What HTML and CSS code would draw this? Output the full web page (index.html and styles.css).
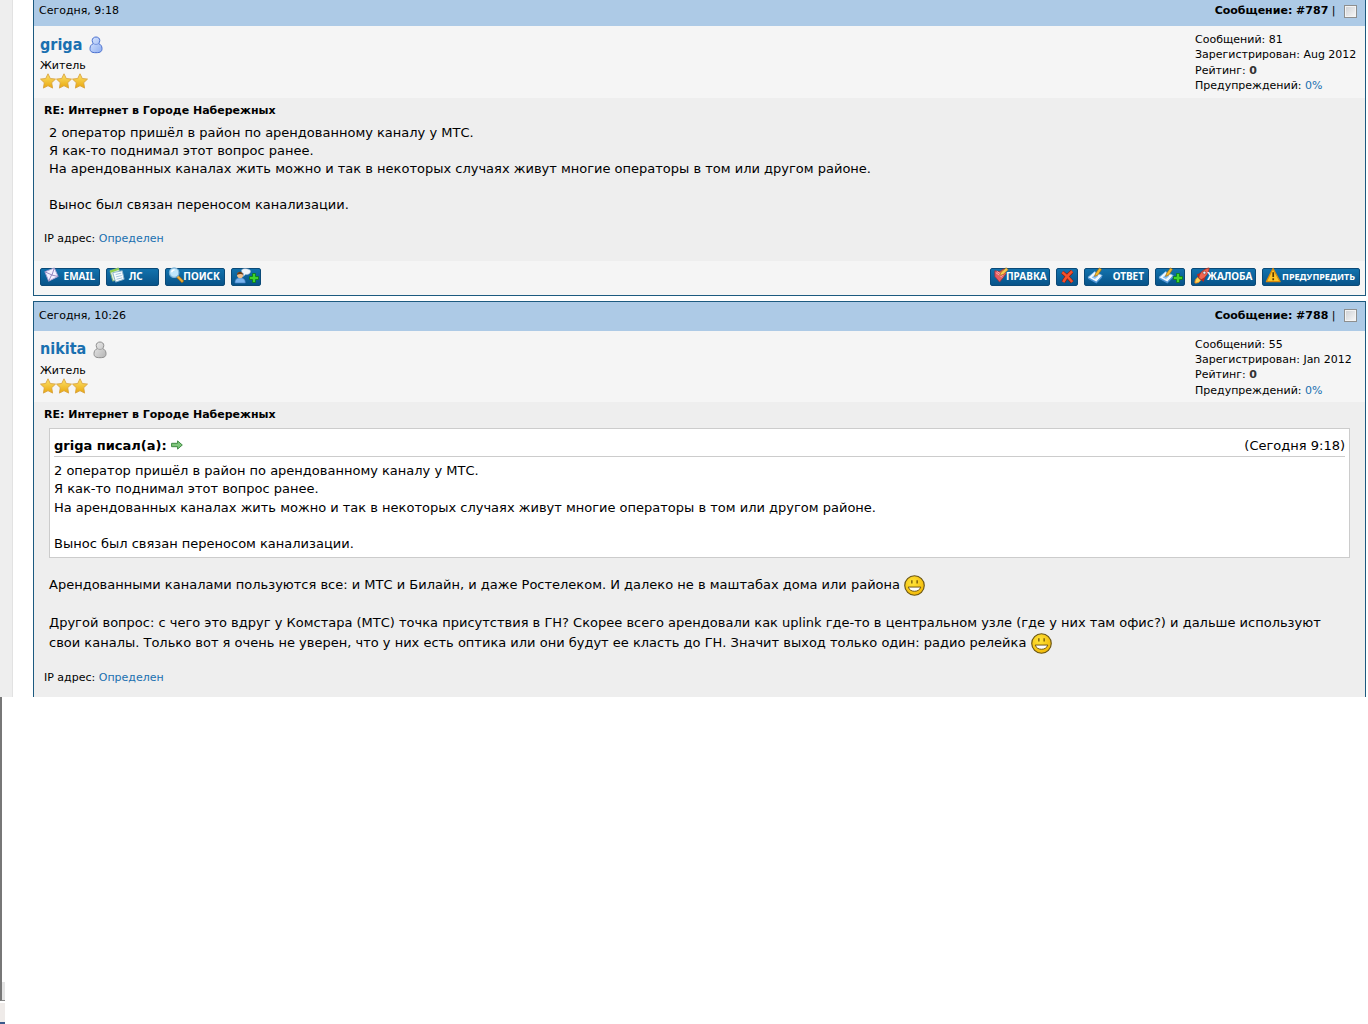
FILE: index.html
```html
<!DOCTYPE html>
<html lang="ru">
<head>
    <meta charset="UTF-8">
    <meta name="viewport" content="width=device-width, initial-scale=1.0">
    <title>Интернет в Городе Набережных</title>
    <link rel="stylesheet" href="styles.css">
</head>
<body>
    <svg class="sprite" aria-hidden="true">
        <defs>
            <linearGradient id="gold" x1="0" y1="0" x2="0" y2="1">
                <stop offset="0" stop-color="#fde36b"/>
                <stop offset="1" stop-color="#e9a70d"/>
            </linearGradient>
            <linearGradient id="blue" x1="0" y1="0" x2="1" y2="1">
                <stop offset="0" stop-color="#dce8ff"/>
                <stop offset="1" stop-color="#8eaef0"/>
            </linearGradient>
            <linearGradient id="gray" x1="0" y1="0" x2="1" y2="1">
                <stop offset="0" stop-color="#eeeeee"/>
                <stop offset="1" stop-color="#b4b4b4"/>
            </linearGradient>
            <radialGradient id="face" cx="0.4" cy="0.35" r="0.7">
                <stop offset="0" stop-color="#ffe53a"/>
                <stop offset="1" stop-color="#f2b705"/>
            </radialGradient>
        </defs>
        <symbol id="star" viewBox="0 0 16 16">
            <path d="M8 .8l2.3 4.7 5.2.6-3.8 3.6.9 5.4L8 12.7l-4.6 2.4.9-5.4L.5 6.1l5.2-.6z" fill="url(#gold)" stroke="#d9a441" stroke-width=".9" stroke-linejoin="round"/>
        </symbol>
        <symbol id="smile" viewBox="0 0 20 20">
            <circle cx="10" cy="10" r="9.3" fill="url(#face)" stroke="#6b5718" stroke-width="1.1"/>
            <path d="M7.500 5v3M12.500 5v3" stroke="#5c4200" stroke-width="1.1"/>
            <path d="M4 11.500h12c-.9 2.600-3 4-6 4s-5.100-1.400-6-4z" fill="#fff" stroke="#6b5210" stroke-width=".9"/>
        </symbol>
        <symbol id="pen" viewBox="0 0 18 18">
            <path d="M1 11l7-6 8 4-6 7z" fill="#eef7ff" stroke="#83b9e6"/>
            <path d="M1 11l9 5 6-7v2l-6 6.500-9-5z" fill="#4d93d4"/>
            <path d="M5 11l4-3.500 3 1.700-3.500 3.500z" fill="#86bdf0"/>
            <path d="M8 10l1-3 4-6 2.500 1.500-4 6z" fill="#f6b92c" stroke="#9a6a13" stroke-width=".7"/>
        </symbol>
        <symbol id="plus" viewBox="0 0 10 10">
            <path d="M3.500.5h3v3h3v3h-3v3h-3v-3h-3v-3h3z" fill="#3fd32c" stroke="#0b7a16" stroke-width=".8"/>
        </symbol>
    </svg>

    <div class="page">
        <div class="side"></div>
        <main class="posts">
            <article class="post">
                <header class="post-head">
                    <span>Сегодня, 9:18</span>
                    <span class="post-num"><strong>Сообщение: #787</strong> | <input type="checkbox" aria-label="Выбрать сообщение 787"></span>
                </header>
                <div class="author">
                    <div>
                        <div class="nick">
                            <a href="#">griga</a>
                            <svg class="status" viewBox="0 0 14 18"><path d="M7 1c2.300 0 3.800 1.500 3.800 3.500 0 1.300-.5 2.200-1.200 3 2 .8 3.400 2.600 3.400 5 0 2.800-1.200 4.200-6 4.200s-6-1.400-6-4.200c0-2.400 1.400-4.200 3.400-5-.7-.8-1.200-1.700-1.200-3C3.200 2.500 4.700 1 7 1z" fill="url(#blue)" stroke="#4a70cf"/><path d="M4.400 7.700c1.600 1 3.600 1 5.200 0" fill="none" stroke="#7897e0"/></svg>
                        </div>
                        <div>Житель</div>
                        <div class="stars"><svg><use href="#star"/></svg><svg><use href="#star"/></svg><svg><use href="#star"/></svg></div>
                    </div>
                    <div class="stats">
                        Сообщений: 81<br>
                        Зарегистрирован: Aug 2012<br>
                        Рейтинг: <b>0</b><br>
                        Предупреждений: <a href="#">0%</a>
                    </div>
                </div>
                <div class="post-body">
                    <div class="subject">RE: Интернет в Городе Набережных</div>
                    <div class="text">
                        2 оператор пришёл в район по арендованному каналу у МТС.<br>
                        Я как-то поднимал этот вопрос ранее.<br>
                        На арендованных каналах жить можно и так в некоторых случаях живут многие операторы в том или другом районе.<br>
                        <br>
                        Вынос был связан переносом канализации.
                    </div>
                    <div class="ip">IP адрес: <a href="#">Определен</a></div>
                </div>
                <footer class="post-foot">
                    <div class="buttons">
                        <button class="btn medium" type="button">
                            <svg viewBox="0 0 18 18"><path d="M2 5l10-4 4 9-10 5z" fill="#f4f1ff" stroke="#a99fd0"/><path d="M2 5l7.500 3.500L12 1M6 15l3-6.500 7 1.500" fill="none" stroke="#9085bd"/></svg>
                            EMAIL
                        </button>
                        <button class="btn small text-left" type="button">
                            <svg viewBox="0 0 18 18"><path d="M1 4l9-3 3 10-9 4z" fill="#dff0dc" stroke="#7fae77"/><path d="M4 6l10-2 2 9-9 3z" fill="#f7fcff" stroke="#8ab2cc"/><path d="M7 8l6-1.500M7.500 10.500l6-1.500M8 13l6-1.500" stroke="#9dc0d8"/><path d="M1 4l9-3 .6 2L2 6z" fill="#8fce4a"/></svg>
                            ЛС
                        </button>
                        <button class="btn medium" type="button">
                            <svg viewBox="0 0 18 18"><path d="M10 10l6 6" stroke="#9a6a1a" stroke-width="3.500"/><path d="M10 10l5.500 5.500" stroke="#f0b03a" stroke-width="2"/><circle cx="6.500" cy="6" r="5" fill="#bfe6fb" stroke="#7fb4d8" stroke-width="1.300"/><path d="M4 5.500C4 4 5.500 3 7 3" stroke="#fff" stroke-width="1.500" fill="none"/></svg>
                            ПОИСК
                        </button>
                        <button class="btn pair" type="button" aria-label="Добавить в друзья">
                            <svg viewBox="0 0 18 18"><path d="M1 17c0-4 2-5.500 5.500-5.500S12 13 12 17z" fill="#78b4ef" stroke="#3b74b8" stroke-width=".7"/><circle cx="6.500" cy="8.500" r="3.300" fill="#f3c08c"/><path d="M3 8.500C3 4 10 4 10 8.500 8 7 6 7 3 8.500z" fill="#6a3c16"/><path d="M8 3.500C8 1 17.500 1 17.500 4.500S13 8 12 8l-2 2V7C8.500 6.500 8 5 8 3.500z" fill="#f1f6fb" stroke="#9db7cf" stroke-width=".6"/></svg>
                            <svg class="plus"><use href="#plus"/></svg>
                        </button>
                    </div>
                    <div class="buttons">
                        <button class="btn medium" type="button">
                            <svg viewBox="0 0 18 18"><path d="M2 4l5 1 4-3 3 5-7 9-5-6z" fill="#e45d62" stroke="#a92e38" stroke-width=".8"/><path d="M3 6l7 5M4 4.500l7 5" stroke="#f8b3b3"/><path d="M7 9l1.500-3.500L14 .8l2 2-5 5z" fill="#f8c94e" stroke="#9f6d19" stroke-width=".7"/></svg>
                            ПРАВКА
                        </button>
                        <button class="btn single" type="button" aria-label="Удалить">
                            <svg viewBox="0 0 18 18"><path d="M3.500 5.500C7 8 11 12 14 16M14 4.500C10 8 7 11 4.500 16" fill="none" stroke="#8c1d0d" stroke-width="4"/><path d="M3.500 5.500C7 8 11 12 14 16M14 4.500C10 8 7 11 4.500 16" fill="none" stroke="#f4512c" stroke-width="2.600"/></svg>
                        </button>
                        <button class="btn medium-plus" type="button">
                            <svg><use href="#pen"/></svg>
                            ОТВЕТ
                        </button>
                        <button class="btn pair" type="button" aria-label="Цитировать">
                            <svg><use href="#pen"/></svg>
                            <svg class="plus"><use href="#plus"/></svg>
                        </button>
                        <button class="btn medium-plus" type="button">
                            <svg viewBox="0 0 18 18"><path d="M1 17c0-3 1-5 3-6l3 3c-1 2-3 3-6 3z" fill="#ffd65a" stroke="#f08c22"/><path d="M3 8l4-2 5 5-2 5-2-2-4-4z" fill="#b92a20"/><path d="M5 11c1-5 5-9 11-10 0 5-3 10-8.500 12.500z" fill="#ef6650" stroke="#a72a1b" stroke-width=".8"/><circle cx="11" cy="6" r="1.600" fill="#dff1ff" stroke="#7c2a20" stroke-width=".6"/></svg>
                            ЖАЛОБА
                        </button>
                        <button class="btn large" type="button">
                            <svg viewBox="0 0 18 18"><path d="M8.500 1.500L16 15.500H1.500z" fill="#ffc627" stroke="#d98a0b" stroke-width="1.300" stroke-linejoin="round"/><path d="M8.700 5.500v5M8.700 12v2" stroke="#5b3a00" stroke-width="1.800"/></svg>
                            ПРЕДУПРЕДИТЬ
                        </button>
                    </div>
                </footer>
            </article>

            <article class="post last">
                <header class="post-head">
                    <span>Сегодня, 10:26</span>
                    <span class="post-num"><strong>Сообщение: #788</strong> | <input type="checkbox" aria-label="Выбрать сообщение 788"></span>
                </header>
                <div class="author">
                    <div>
                        <div class="nick">
                            <a href="#">nikita</a>
                            <svg class="status" viewBox="0 0 14 18"><path d="M7 1c2.300 0 3.800 1.500 3.800 3.500 0 1.300-.5 2.200-1.200 3 2 .8 3.400 2.600 3.400 5 0 2.800-1.200 4.200-6 4.200s-6-1.400-6-4.200c0-2.400 1.400-4.200 3.400-5-.7-.8-1.200-1.700-1.200-3C3.200 2.500 4.700 1 7 1z" fill="url(#gray)" stroke="#8e8e8e"/><path d="M4.400 7.700c1.600 1 3.600 1 5.200 0" fill="none" stroke="#a5a5a5"/></svg>
                        </div>
                        <div>Житель</div>
                        <div class="stars"><svg><use href="#star"/></svg><svg><use href="#star"/></svg><svg><use href="#star"/></svg></div>
                    </div>
                    <div class="stats">
                        Сообщений: 55<br>
                        Зарегистрирован: Jan 2012<br>
                        Рейтинг: <b>0</b><br>
                        Предупреждений: <a href="#">0%</a>
                    </div>
                </div>
                <div class="post-body">
                    <div class="subject">RE: Интернет в Городе Набережных</div>
                    <div class="text">
                        <blockquote>
                            <div class="quote-head">
                                <strong>griga писал(а): <a href="#" aria-label="К сообщению"><svg class="arrow" viewBox="0 0 12 10"><path d="M.6 3.300h6V.9L11.300 5 6.600 9.100V6.700h-6z" fill="#7fc67c" stroke="#3d8a42"/></svg></a></strong>
                                <span>(Сегодня 9:18)</span>
                            </div>
                            2 оператор пришёл в район по арендованному каналу у МТС.<br>
                            Я как-то поднимал этот вопрос ранее.<br>
                            На арендованных каналах жить можно и так в некоторых случаях живут многие операторы в том или другом районе.<br>
                            <br>
                            Вынос был связан переносом канализации.
                        </blockquote>
                        Арендованными каналами пользуются все: и МТС и Билайн, и даже Ростелеком. И далеко не в маштабах дома или района <svg class="smile"><use href="#smile"/></svg><br>
                        <br>
                        Другой вопрос: с чего это вдруг у Комстара (МТС) точка присутствия в ГН? Скорее всего арендовали как uplink где-то в центральном узле (где у них там офис?) и дальше используют свои каналы. Только вот я очень не уверен, что у них есть оптика или они будут ее класть до ГН. Значит выход только один: радио релейка <svg class="smile"><use href="#smile"/></svg>
                    </div>
                    <div class="ip">IP адрес: <a href="#">Определен</a></div>
                </div>
            </article>
        </main>
    </div>

    <div class="edge">
        <div class="edge-scroll"></div>
        <div class="edge-bar"></div>
    </div>
</body>
</html>
```
FILE: styles.css
```css
* {
    box-sizing: border-box;
}
body {
    margin: 0;
    min-height: 100vh;
    display: flex;
    flex-direction: column;
    background: #fff;
    color: #000;
    font-family: Verdana, "DejaVu Sans", sans-serif;
    font-size: 11px;
    line-height: 1.4;
}
a {
    color: #1a70b0;
    text-decoration: none;
}
.sprite {
    position: absolute;
    width: 0;
    height: 0;
}
.page {
    display: flex;
    gap: 20px;
    padding-right: 2px;
    overflow: hidden;
}
.side {
    width: 13px;
    background: #eee;
    border-right: 1px solid #e2e2e2;
}
.posts {
    flex: 1;
    margin-top: -4px;
}
.post {
    border: 1px solid #1c5a80;
    margin-bottom: 5px;
    background: #f5f5f5;
}
.post.last {
    border-bottom: none;
    margin-bottom: 0;
}
.post-head {
    display: flex;
    justify-content: space-between;
    height: 29px;
    padding: 6px 8px 0 5px;
    background: #adcae6;
}
.post-num input {
    appearance: none;
    width: 13px;
    height: 13px;
    margin: 0 0 0 5px;
    border: 1px solid #8e8f8f;
    background: linear-gradient(135deg, #cdd0d4, #f8f8f8);
    box-shadow: inset 0 0 0 1px #f4f4f4;
    vertical-align: middle;
}
.author {
    display: flex;
    justify-content: space-between;
    padding: 6px 0 4px 6px;
}
.nick {
    display: flex;
    align-items: center;
    gap: 7px;
    height: 26px;
    font-family: Tahoma, "DejaVu Sans Condensed", "Noto Sans", sans-serif;
    font-size: 16px;
    font-weight: bold;
}
.status {
    width: 14px;
    height: 18px;
}
.stars {
    display: flex;
}
.stars svg {
    width: 16px;
    height: 16px;
}
.stats {
    width: 170px;
}
.stats b {
    color: #333;
}
.post-body {
    padding: 4px 10px 13px;
    background: #eee;
}
.last .post-body {
    padding-bottom: 10px;
}
.subject {
    font-weight: bold;
    line-height: 18px;
}
.text {
    padding: 4px 5px 5px;
    font-size: 13px;
}
.ip {
    margin-top: 10px;
    line-height: 18px;
}
blockquote {
    margin: 0 0 17px;
    padding: 8px 4px 4px;
    border: 1px solid #ccc;
    background: #fff;
}
.quote-head {
    display: flex;
    justify-content: space-between;
    margin-bottom: 5px;
    padding-bottom: 1px;
    border-bottom: 1px solid #ccc;
}
.arrow {
    width: 12px;
    height: 10px;
}
.smile {
    width: 21px;
    height: 21px;
    vertical-align: middle;
}
.post-foot {
    display: flex;
    justify-content: space-between;
    height: 34px;
    padding: 7px 5px 0 6px;
}
.buttons {
    display: flex;
    gap: 6px;
}
.btn {
    display: flex;
    align-items: center;
    justify-content: space-between;
    height: 18px;
    padding: 0 4px 1px 2px;
    border: 1px solid #0b4a78;
    border-radius: 2px;
    background: linear-gradient(#1272ad, #075389);
    color: #fff;
    font-family: "Noto Sans", sans-serif;
    font-size: 10px;
    font-weight: bold;
    line-height: 15px;
    white-space: nowrap;
    cursor: pointer;
}
.btn svg {
    flex: none;
    width: 17px;
    height: 17px;
    margin: -2px -4px 0 0;
}
.btn .plus {
    width: 10px;
    height: 10px;
    margin: 3px -3px 0 0;
}
.btn.single {
    width: 22px;
}
.btn.pair {
    width: 30px;
}
.btn.small {
    width: 53px;
}
.btn.text-left {
    justify-content: flex-start;
    gap: 7px;
}
.btn.medium {
    width: 60px;
}
.btn.medium-plus {
    width: 65px;
}
.btn.large {
    width: 98px;
    font-size: 9px;
}
/* what is left of the window behind */
.edge {
    flex: 1;
    display: flex;
    flex-direction: column;
    gap: 2px;
    width: 5px;
}
.edge-scroll {
    flex: 1;
    border-left: 2px solid #777;
    border-bottom: 1px solid #888;
    background: linear-gradient(#fff, #fff) top / 100% calc(100% - 18px) no-repeat #e4e4e4;
}
.edge-bar {
    height: 21px;
    border-bottom: 2px solid #3a5a8c;
    background: #efebe9;
}
```
